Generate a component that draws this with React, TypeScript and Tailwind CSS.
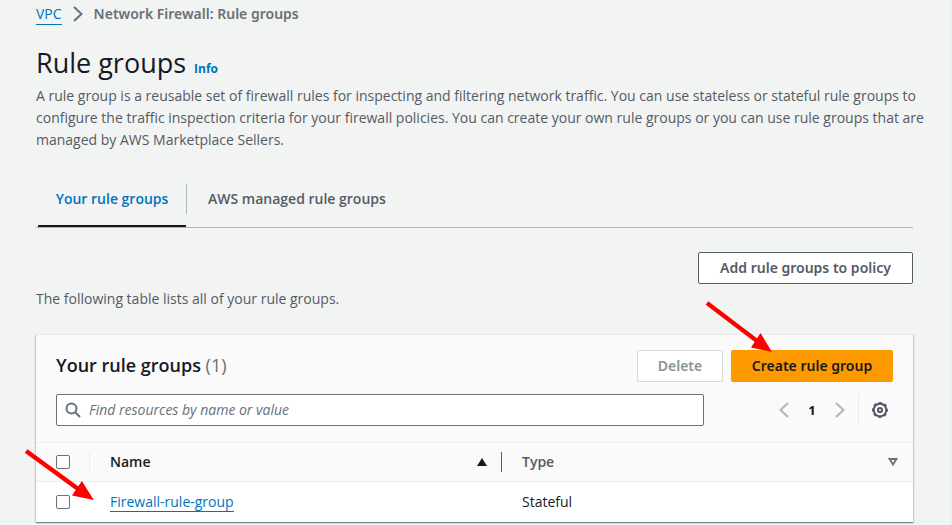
import React from "react";

function Chevron({ className, flip = false }: { className: string; flip?: boolean }) {
  return (
    <svg viewBox="0 0 16 16" className={className} fill="none" stroke="currentColor" strokeWidth="2" aria-hidden="true">
      <path d={flip ? "M12 1 4.500 8l7.500 7" : "M4 1l7.500 7L4 15"} />
    </svg>
  );
}

function Arrow({ className }: { className: string }) {
  return (
    <svg viewBox="0 0 72 54" preserveAspectRatio="none" className={className} aria-hidden="true">
      <path d="M3 2 53 40" stroke="#ff0000" strokeWidth="4.200" />
      <path d="M68 51 56.500 32 47 46.500z" fill="#ff0000" />
    </svg>
  );
}

function Breadcrumbs() {
  return (
    <nav aria-label="Breadcrumbs" className="flex h-[22px] items-center text-[#687078]">
      <a href="#vpc" className="h-[21px] border-b border-[#0073bb] leading-5 text-[#0073bb]">VPC</a>
      <Chevron className="mx-2 size-4" />
      <span className="font-['Noto_Sans',sans-serif] font-semibold">Network Firewall: Rule groups</span>
    </nav>
  );
}

function Tabs() {
  return (
    <div role="tablist" className="mt-6 flex h-[53px] border-b border-[#aab7b8] pl-0.5 font-semibold">
      <button type="button" role="tab" aria-selected="true" className="flex w-[148px] justify-center border-b-2 border-[#16191f] pt-[13px] text-[#0073bb]">
        Your rule groups
      </button>
      <span className="mt-[9px] h-[30px] w-px bg-[#aab7b8]" />
      <button type="button" role="tab" aria-selected="false" className="flex px-[21px] pt-[13px] text-[#545b64]">
        AWS managed rule groups
      </button>
    </div>
  );
}

function CardHeader() {
  return (
    <div className="px-5 pt-[15px] pb-4">
      <div className="flex items-center">
        <h2 className="flex-1 pb-0.5 text-lg leading-[22px] font-semibold">
          Your rule groups <span className="font-normal text-[#687078]">(1)</span>
        </h2>
        <button type="button" disabled className="h-8 w-[86px] rounded-xs border border-[#d5dbdb] bg-white font-['Noto_Sans',sans-serif] font-semibold text-[#879596]">
          Delete
        </button>
        <button type="button" className="ml-2 h-8 w-[162px] rounded-xs bg-[#ff9900] font-['Noto_Sans',sans-serif] font-semibold text-[#16191f]">
          Create rule group
        </button>
      </div>
      <div className="mt-3 flex items-center">
        <label className="flex h-8 max-w-[648px] flex-1 items-center rounded-xs border border-[#687078] bg-white pl-2">
          <svg viewBox="0 0 16 16" className="size-4 text-[#687078]" fill="none" stroke="currentColor" strokeWidth="2" aria-hidden="true">
            <circle cx="6.500" cy="6.500" r="5" />
            <path d="m10 10 5 5" />
          </svg>
          <input
            type="search"
            aria-label="Find resources by name or value"
            placeholder="Find resources by name or value"
            className="ml-2 flex-1 bg-transparent outline-none placeholder:text-[#687078] placeholder:italic"
          />
        </label>
        <div className="ml-auto flex items-center">
          <button type="button" aria-label="Previous page" className="text-[#aab7b8]"><Chevron flip className="size-4" /></button>
          <button type="button" className="w-10 text-center text-[13px] font-bold">1</button>
          <button type="button" aria-label="Next page" className="text-[#aab7b8]"><Chevron className="size-4" /></button>
          <span className="ml-2.5 h-8 w-px bg-[#eaeded]" />
          <button type="button" aria-label="Preferences" className="mr-1 ml-3 text-[#545b64]">
            <svg viewBox="0 0 18 18" className="size-[18px]" fill="none" stroke="currentColor" strokeLinejoin="round" aria-hidden="true">
              <circle cx="9" cy="9" r="6.300" strokeWidth="2" />
              <circle cx="9" cy="9" r="7.300" strokeWidth="1.600" strokeDasharray="3 2.733" strokeDashoffset="1.500" />
              <circle cx="9" cy="9" r="2.100" strokeWidth="2" />
            </svg>
          </button>
        </div>
      </div>
    </div>
  );
}

function RuleTable() {
  return (
    <table className="w-full table-fixed border-collapse text-left">
      <colgroup>
        <col className="w-[54px]" />
        <col className="w-[412px]" />
        <col />
      </colgroup>
      <thead>
        <tr className="h-[39px] border-y border-[#eaeded]">
          <th className="p-0">
            <div className="flex h-5 items-center border-r border-[#eaeded] pl-5">
              <input type="checkbox" aria-label="Select all" className="size-3.5 appearance-none rounded-xs border border-[#687078] bg-white" />
            </div>
          </th>
          <th className="p-0 font-semibold">
            <div className="flex h-5 items-center justify-between border-r border-[#545b64] pr-3.5 pl-5">
              Name
              <svg viewBox="0 0 10 8" className="h-2 w-2.5" aria-hidden="true"><path d="M5 0 10 8H0z" fill="#16191f" /></svg>
            </div>
          </th>
          <th className="p-0 font-semibold text-[#545b64]">
            <div className="flex h-5 items-center justify-between pr-[15px] pl-5">
              Type
              <svg viewBox="0 0 10 8" className="h-2 w-2.5" fill="none" stroke="#687078" strokeWidth="1.800" aria-hidden="true"><path d="M1.500 1h7L5 6.500z" /></svg>
            </div>
          </th>
        </tr>
      </thead>
      <tbody>
        <tr className="h-10 bg-white">
          <td className="p-0">
            <div className="flex items-center pl-5">
              <input type="checkbox" aria-label="Select Firewall-rule-group" className="size-3.5 appearance-none rounded-xs border border-[#687078] bg-white" />
            </div>
          </td>
          <td className="p-0 pl-5">
            <a href="#firewall-rule-group" className="border-b border-[#0073bb] text-[#0073bb]">Firewall-rule-group</a>
          </td>
          <td className="p-0 pl-5">Stateful</td>
        </tr>
      </tbody>
    </table>
  );
}

export default function App() {
  return (
    <main className="min-h-screen border-r border-[#eaeded] bg-[#f2f3f3] pt-[3px] pr-[38px] pl-9 font-['Open_Sans','Noto_Sans',sans-serif] text-sm leading-[22px] text-[#16191f]">
      <Breadcrumbs />
      <header className="mt-5">
        <div className="flex items-baseline">
          <h1 className="text-[27px] leading-9">Rule groups</h1>
          <a href="#info" className="ml-2 text-xs font-bold text-[#0073bb]">Info</a>
        </div>
        <p className="-mr-5 mt-1 text-[#545b64]">
          A rule group is a reusable set of firewall rules for inspecting and filtering network traffic. You can use stateless or stateful rule groups to configure the traffic inspection criteria for your firewall policies. You can create your own rule groups or you can use rule groups that are managed by AWS Marketplace Sellers.
        </p>
      </header>
      <Tabs />
      <div className="mt-6 flex justify-end">
        <button type="button" className="h-8 w-[215px] rounded-xs border border-[#545b64] bg-white font-['Noto_Sans',sans-serif] font-semibold text-[#545b64]">
          Add rule groups to policy
        </button>
      </div>
      <p className="mt-1 text-[#545b64]">The following table lists all of your rule groups.</p>
      <section className="relative mt-6 border-t border-[#eaeded] bg-[#fafafa] shadow-[0_1px_1px_0_rgba(0,28,36,0.3),1px_1px_1px_0_rgba(0,28,36,0.15),-1px_1px_1px_0_rgba(0,28,36,0.15)]">
        <CardHeader />
        <RuleTable />
        <Arrow className="pointer-events-none absolute -top-[34px] right-[137px] h-[54px] w-[72px]" />
        <Arrow className="pointer-events-none absolute top-[114px] -left-[13px] h-[54px] w-[75px]" />
      </section>
    </main>
  );
}
